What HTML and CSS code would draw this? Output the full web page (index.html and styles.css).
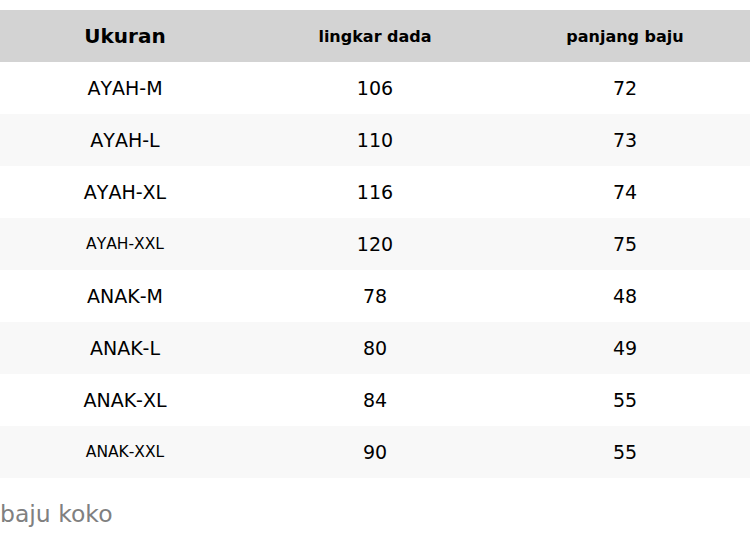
FILE: index.html
```html
<!DOCTYPE html>
<html>
<head>
<meta charset="utf-8">
<link rel="stylesheet" href="styles.css">
</head>
<body>
<table class="size-table">
  <thead>
    <tr>
      <th class="h-main">Ukuran</th>
      <th class="h-sub">lingkar dada</th>
      <th class="h-sub">panjang baju</th>
    </tr>
  </thead>
  <tbody>
    <tr><td>AYAH-M</td><td>106</td><td>72</td></tr>
    <tr><td>AYAH-L</td><td>110</td><td>73</td></tr>
    <tr><td>AYAH-XL</td><td>116</td><td>74</td></tr>
    <tr><td class="small">AYAH-XXL</td><td>120</td><td>75</td></tr>
    <tr><td>ANAK-M</td><td>78</td><td>48</td></tr>
    <tr><td>ANAK-L</td><td>80</td><td>49</td></tr>
    <tr><td>ANAK-XL</td><td>84</td><td>55</td></tr>
    <tr><td class="small">ANAK-XXL</td><td>90</td><td>55</td></tr>
  </tbody>
</table>
<p class="caption">baju koko</p>
</body>
</html>
```
FILE: styles.css
```css
html, body {
  margin: 0;
  padding: 0;
  background: #ffffff;
}
body {
  padding-top: 10px;
  font-family: "DejaVu Sans", sans-serif;
  color: #000;
}
.size-table {
  width: 750px;
  border-collapse: collapse;
  table-layout: fixed;
}
.size-table th,
.size-table td {
  height: 52px;
  padding: 0;
  text-align: center;
  vertical-align: middle;
}
.size-table thead tr {
  background: #d3d3d3;
}
.h-main {
  font-size: 20px;
  font-weight: bold;
}
.h-sub {
  font-size: 16px;
  font-weight: bold;
}
.size-table td {
  font-size: 19px;
  font-kerning: none;
}
.size-table td.small {
  font-size: 15.5px;
}
.size-table tbody tr:nth-child(even) {
  background: #f8f8f8;
}
.caption {
  margin: 22px 0 0 0;
  font-size: 23.5px;
  color: #808080;
}
```
